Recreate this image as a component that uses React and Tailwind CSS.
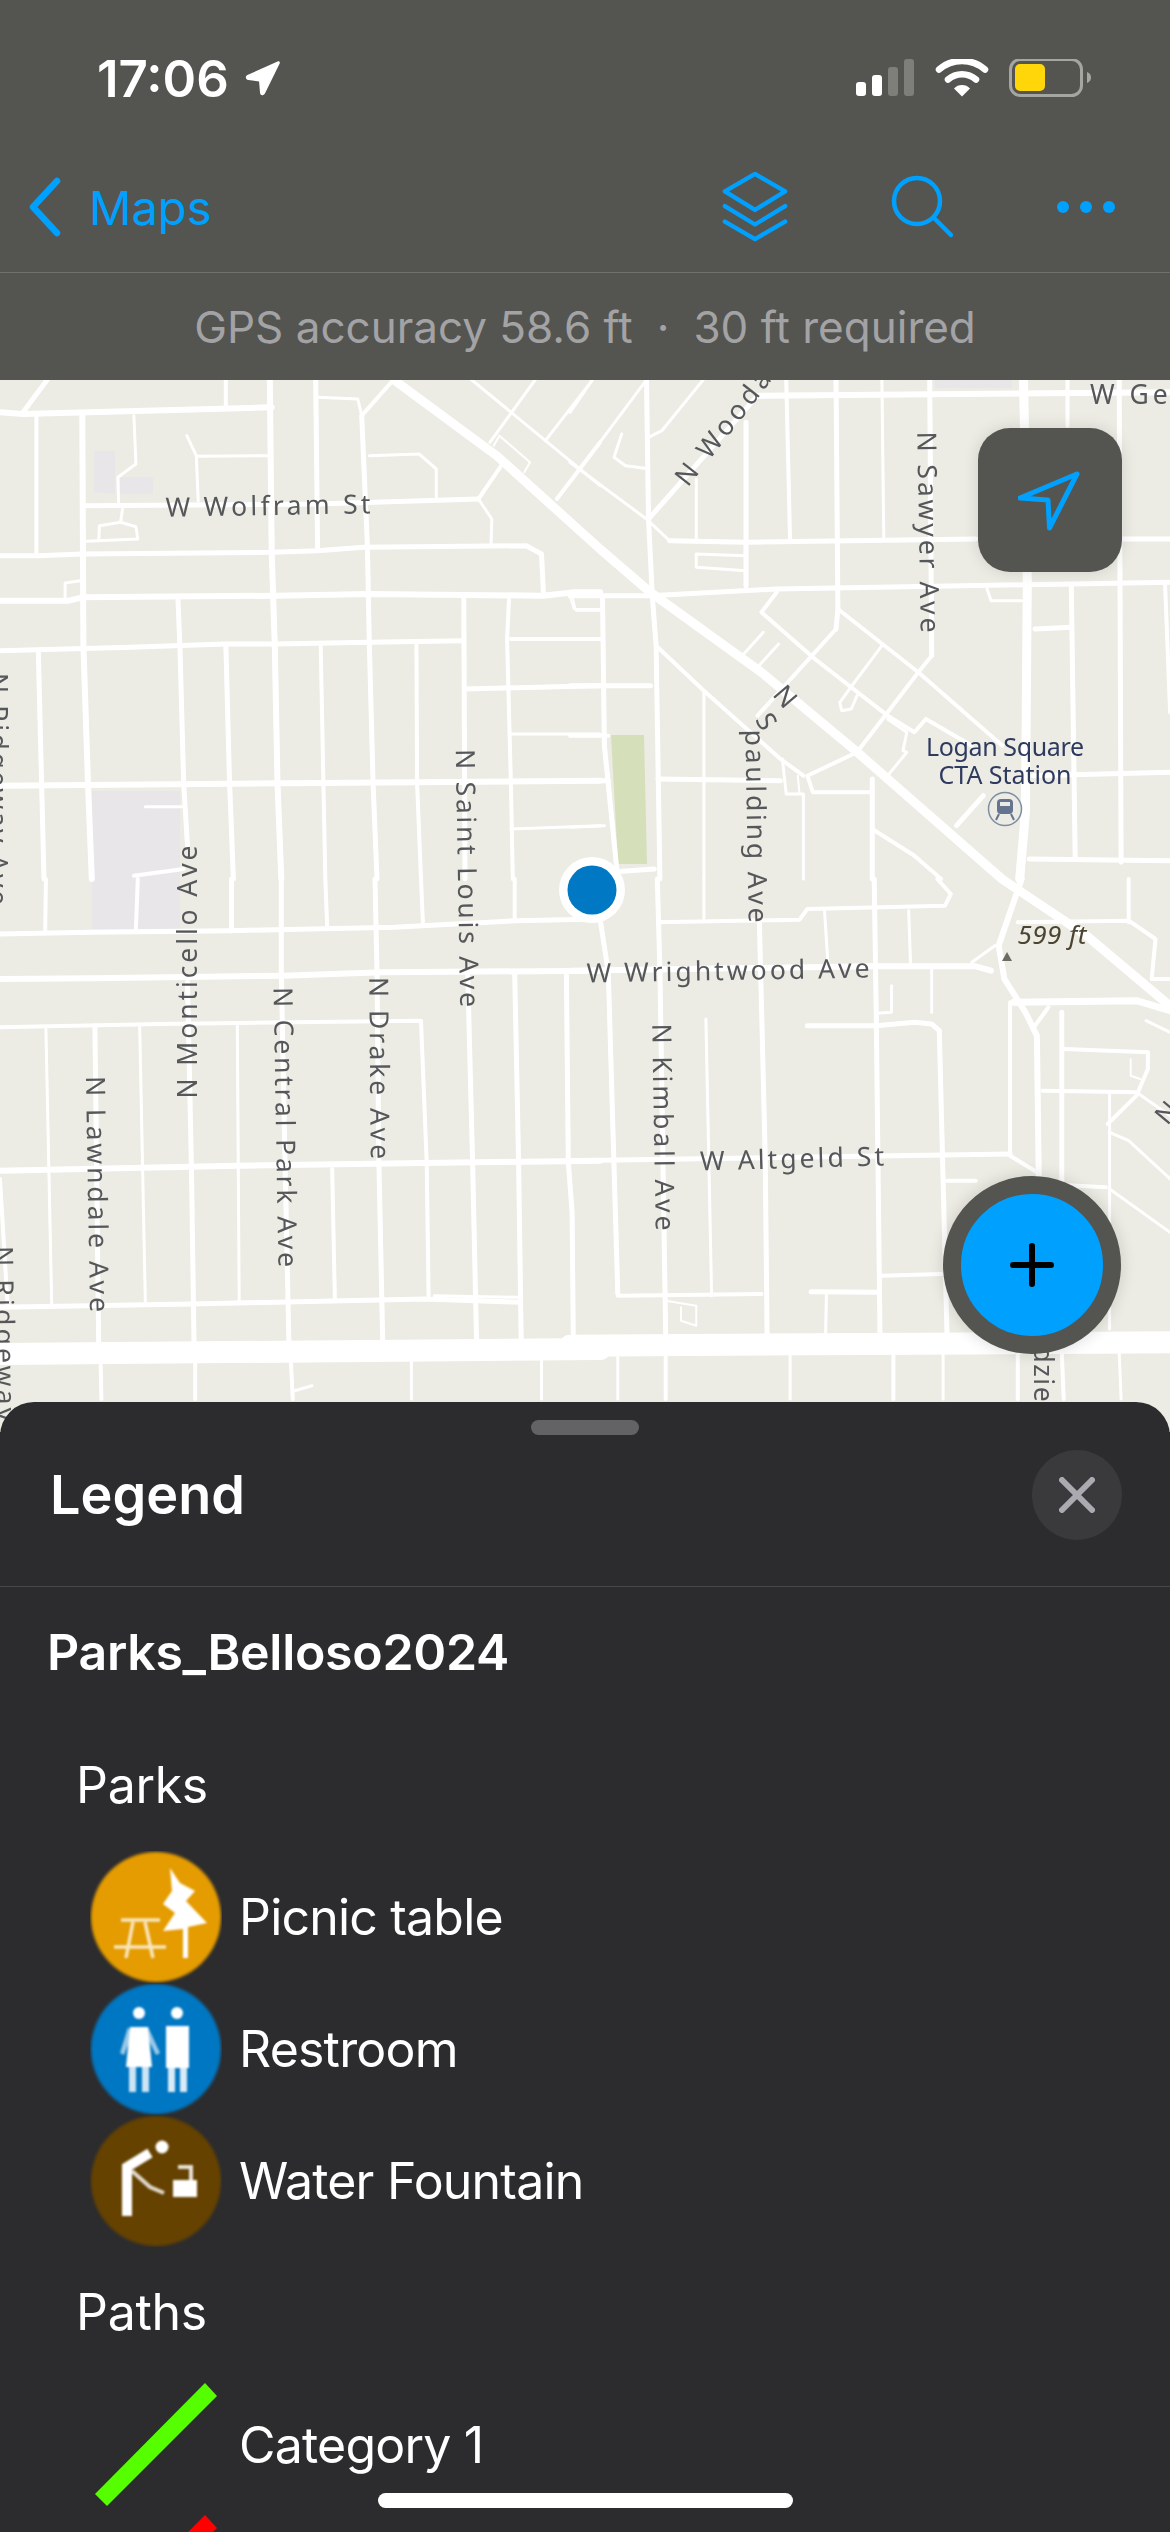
import React from "react";

const Z2 = [0, 380], Z3 = [570, 380], Z4 = [0, 880], Z5 = [570, 880];
const S = 2.613;
const pts = (z, p) =>
  p.split(" ").map((q) => {
    const [x, y] = q.split(",").map(Number);
    return `${(z[0] + x / S).toFixed(1)},${(z[1] + y / 3).toFixed(1)}`;
  }).join(" ");

const roads = [
  // zoom 2 : top left
  [Z2, 6, "0,100 60,105 710,85"], [Z2, 5, "60,100 125,0"], [Z2, 4, "590,85 590,0"],
  [Z2, 6, "705,0 710,520 718,800 725,1215 735,1500"],
  [Z2, 4, "95,110 95,530"], [Z2, 5, "100,815 115,1500"],
  [Z2, 6, "215,110 218,800 230,1215 240,1500"],
  [Z2, 3, "350,110 355,255 308,295 310,375"], [Z2, 3, "488,170 513,230 518,365"], [Z2, 3, "513,232 705,230"],
  [Z2, 5, "225,380 830,375 1250,360"],
  [Z2, 3, "320,390 315,430 260,440 258,485"], [Z2, 3, "315,430 355,443 360,480 225,487"],
  [Z2, 5, "0,530 100,530 215,525 710,520 830,515 950,505 1375,500 1415,525 1420,640"],
  [Z2, 6, "0,665 180,665 215,655 720,650 965,645 1420,650 1500,640 1568,640"],
  [Z2, 3, "170,655 170,612 210,605"], [Z2, 5, "465,665 470,800 480,1215 490,1400"],
  [Z2, 5, "0,815 340,805 590,795 720,795 965,790 1210,785"],
  [Z2, 5, "590,795 600,1215 610,1500"], [Z2, 4, "838,800 850,1500"],
  [Z2, 5, "945,110 960,500 965,790 975,1215 985,1500"], [Z2, 3, "945,110 935,60 830,55"], [Z2, 4, "945,110 1030,0"],
  [Z2, 5, "825,0 830,515"], [Z2, 4, "1088,790 1090,1215 1100,1500"], [Z2, 5, "1212,660 1215,1500"],
  [Z2, 4, "1330,660 1325,780 1335,1215 1340,1500"], [Z2, 4, "1335,780 1568,780"], [Z2, 5, "1215,930 1568,920"],
  [Z2, 3, "1335,1065 1568,1065"], [Z2, 3, "1335,1350 1568,1340"], [Z2, 6, "0,1220 1568,1205"],
  [Z2, 2, "1495,650 1505,695 1568,695"], [Z2, 3, "965,230 1095,225 1140,270 1140,355"],
  [Z2, 3, "1250,360 1285,420 1283,500"], [Z2, 4, "1250,360 1310,260"], [Z2, 3, "1280,190 1400,0"],
  [Z2, 3, "1230,0 1568,320"], [Z2, 2, "1305,170 1385,250 1370,280"], [Z2, 2, "1290,200 1305,170"],
  [Z2, 3, "1425,185 1550,0"], [Z2, 4, "1455,360 1568,190"], [Z2, 3, "380,1283 475,1283"],
  [Z2, 4, "350,1490 480,1470"],
  // zoom 4 : bottom left
  [Z4, 5, "0,165 240,160 600,155 1030,145 1350,125 1568,120"],
  [Z4, 6, "0,300 240,298 740,290 1000,280 1568,275"],
  [Z4, 4, "0,445 420,435 1100,425 1115,850 1120,1250"],
  [Z4, 6, "0,875 620,860 1240,850 1568,845"],
  [Z4, 5, "0,1285 500,1275 1110,1260 1360,1270"], [Z4, 3, "1135,1250 1355,1255"],
  [Z4, 3, "120,450 135,1275"], [Z4, 5, "248,440 258,1400"], [Z4, 4, "263,1460 265,1560"],
  [Z4, 3, "365,445 380,1280"], [Z4, 5, "490,310 500,860 507,1390"], [Z4, 4, "510,1450 510,1560"],
  [Z4, 3, "620,440 625,1270"], [Z4, 5, "735,0 735,280 745,860 755,1390"], [Z4, 4, "760,1450 765,1560"],
  [Z4, 5, "605,0 605,155"], [Z4, 4, "850,0 855,145"], [Z4, 4, "868,870 875,1265"],
  [Z4, 5, "980,0 985,280 990,850 1000,1385"], [Z4, 4, "1100,0 1105,130"],
  [Z4, 5, "1222,280 1235,850 1245,1380"], [Z4, 4, "1345,0 1345,120"], [Z4, 5, "1345,285 1355,850 1362,1385"],
  [Z4, 5, "1480,285 1485,850 1495,1000 1498,1380"], [Z4, 3, "1075,1450 1075,1560"], [Z4, 3, "1415,1440 1415,1560"],
  [Z4, 3, "770,1535 815,1520"], [Z4, 4, "0,900 20,1285"], [Z4, 4, "120,0 118,155"], [Z4, 4, "360,0 355,150"],
  // zoom 5 : bottom right
  [Z5, 4, "230,130 600,122 620,90 980,80 995,45 960,0"],
  [Z5, 5, "80,130 100,280 125,1245"], [Z5, 5, "228,0 235,270 250,1370"], [Z5, 5, "495,130 510,830 515,1370"],
  [Z5, 3, "350,0 350,125"], [Z5, 3, "665,95 675,270"], [Z5, 5, "795,0 800,400 810,1365"], [Z5, 3, "885,95 890,260"],
  [Z5, 6, "0,275 780,262 1060,262 1100,275"], [Z5, 5, "0,845 1150,825"], [Z5, 4, "125,1250 500,1245"],
  [Z5, 3, "355,420 370,1250"], [Z5, 5, "620,440 800,440 900,430 945,435 965,455 985,1365"],
  [Z5, 3, "840,320 840,400 805,403"], [Z5, 3, "945,270 945,400"], [Z5, 4, "815,1190 970,1185"],
  [Z5, 5, "630,1238 800,1240"], [Z5, 3, "670,1245 668,1370"], [Z5, 4, "985,905 1060,905"],
  [Z5, 3, "125,1435 125,1560"], [Z5, 4, "250,1435 250,1560"], [Z5, 3, "575,1430 575,1560"],
  [Z5, 4, "845,1425 845,1560"], [Z5, 3, "975,1425 975,1560"], [Z5, 4, "1170,1420 1170,1560"],
  [Z5, 4, "1285,1420 1290,1560"], [Z5, 3, "1435,1420 1440,1560"],
  [Z5, 2, "250,1265 330,1280 330,1340 290,1325 290,1285"],
  [Z5, 6, "1180,0 1120,200 1135,300 1190,400 1220,470 1225,900"],
  [Z5, 7, "1160,370 1480,365 1568,395"],
  [Z5, 4, "1250,385 1215,440"], [Z5, 4, "1150,370 1150,830 1220,880"], [Z5, 5, "1285,400 1285,910"],
  [Z5, 4, "1235,635 1480,640"], [Z5, 4, "1290,510 1510,520 1510,570 1480,650 1405,735"],
  [Z5, 2, "1465,540 1465,590 1490,600"], [Z5, 3, "1410,640 1410,1350"], [Z5, 3, "1480,640 1568,710"],
  [Z5, 3, "1410,760 1460,785 1568,900"], [Z5, 3, "1410,930 1568,1060"], [Z5, 4, "1240,915 1400,925"],
  [Z5, 3, "1050,250 1110,200"], [Z5, 4, "1170,130 1460,125 1530,180 1520,300 1568,300"],
  [Z5, 4, "1460,0 1460,130"], [Z5, 3, "1505,425 1568,460"],
  // zoom 3 : top right
  [Z3, 6, "490,50 1568,40"], [Z3, 5, "260,485 460,490 1060,480"], [Z3, 5, "1440,480 1568,480"],
  [Z3, 5, "0,650 210,650 540,630 1568,610"], [Z3, 5, "200,0 205,420 215,650 225,800 235,1500"],
  [Z3, 3, "330,300 330,490"], [Z3, 5, "460,130 460,620"], [Z3, 4, "565,0 575,490"],
  [Z3, 5, "695,0 700,690 695,750"], [Z3, 3, "815,0 820,480"], [Z3, 5, "940,0 945,830"],
  [Z3, 9, "1185,0 1195,610 1190,1300 1175,1500"], [Z3, 4, "1300,0 1300,140"], [Z3, 5, "1310,620 1320,1440"],
  [Z3, 5, "1435,0 1440,1450"], [Z3, 4, "1555,620 1568,1000"],
  [Z3, 3, "0,310 195,10"], [Z3, 3, "205,175 240,155 350,0"], [Z3, 5, "205,420 490,50"], [Z3, 3, "60,0 0,100"],
  [Z3, 3, "0,250 200,420 260,485"], [Z3, 3, "135,165 115,235 145,260 195,268"],
  [Z3, 3, "460,530 330,525 330,565 460,575"], [Z3, 2, "0,655 10,690 80,690"], [Z3, 5, "85,650 90,1100 125,1500"],
  [Z3, 4, "0,780 85,780"], [Z3, 5, "0,920 210,920"], [Z3, 4, "0,1070 100,1070"], [Z3, 5, "0,1205 100,1205"],
  [Z3, 4, "225,800 350,935 550,1140 610,1190"], [Z3, 4, "540,640 500,700 640,840 830,1010 900,1060 930,1020 1050,1100"],
  [Z3, 4, "700,690 910,880 1130,1100"], [Z3, 4, "945,830 910,880 750,1120 620,1190 635,1240 790,1240"],
  [Z3, 4, "695,750 490,1010"], [Z3, 3, "505,760 450,830"], [Z3, 3, "545,795 490,865"],
  [Z3, 3, "815,800 740,915 705,970 710,995 735,990 750,950"], [Z3, 3, "830,1020 880,1060 870,1115 880,1120 830,1190"],
  [Z3, 3, "350,935 350,1500"], [Z3, 5, "230,1200 550,1205"], [Z3, 3, "555,1140 565,1245 610,1245 610,1500"],
  [Z3, 2, "595,1190 600,1245"], [Z3, 4, "790,1350 900,1430 970,1500"], [Z3, 5, "790,1200 790,1500"],
  [Z3, 5, "1010,1340 1080,1250"], [Z3, 5, "1215,750 1310,745"], [Z3, 5, "1210,1190 1568,1180"],
  [Z3, 3, "1090,630 1100,665 1180,665"], [Z3, 5, "1200,1440 1568,1445"], [Z3, 3, "0,1345 90,1340"], [Z3, 5, "100,1480 220,1470"],
  // large roads
  [Z4, 22, "0,1425 1568,1410"], [Z5, 22, "0,1400 1568,1390"],
];

const labels = [
  ["W Wolfram St", 268, 506, 205, -1],
  ["N Saint Louis Ave", 468, 879, 258, 89],
  ["N Monticello Ave", 187, 973, 253, -90],
  ["N Central Park Ave", 286, 1128, 280, 89],
  ["N Drake Ave", 380, 1069, 182, 89.5],
  ["N Lawndale Ave", 98, 1195, 236, 89],
  ["N Ridgeway Ave", 6, 1367, 240, 89],
  ["N Ridgeway Ave", -2, 790, 232, 90],
  ["N Kimball Ave", 664, 1128, 207, 89],
  ["W Wrightwood Ave", 728, 971, 283, -1],
  ["W Altgeld St", 792, 1159, 184, -1.5],
  ["N Sawyer Ave", 929, 533, 201, 89],
  ["N Woodard St", 746, 398, 215, -52],
  ["N", 786, 697, 0, 50],
  ["S", 767, 722, 0, 60],
  ["paulding Ave", 757, 827, 193, 89],
  ["N Kedzie Ave", 1044, 1372, 178, 90],
  ["N", 1166, 1113, 0, -50],
];

function MapDrawing() {
  return (
    <svg width="1170" height="1052" viewBox="0 381 1170 1052" className="block blur-[0.4px]">
      <rect x="0" y="381" width="1170" height="1052" fill="#ecece4" />
      <polygon points="94,452 115,452 115,495 94,493" fill="#e9e6ea" />
      <polygon points="120,478 153,478 153,495 120,495" fill="#e9e6ea" />
      <polygon points="92,792 180,792 180,930 92,930" fill="#e9e6ea" />
      <polygon points="935,381 1012,381 1012,389 935,389" fill="#e9e6ea" />
      <polygon points="611,736 644,736 647,865 618,865" fill="#d5dfba" />
      {roads.map(([z, w, p], i) => (
        <polyline key={i} points={pts(z, p)} fill="none" stroke="#ffffff" strokeWidth={w} strokeLinejoin="round" strokeLinecap="round" />
      ))}
      <polyline points="394,381 497,457 600,550 650,593 761,673 857,753 1002,880 1087,937 1170,1007" fill="none" stroke="#ffffff" strokeWidth="9" strokeLinejoin="round" />
      <g fill="#55575a" fontFamily="'Noto Sans', sans-serif" fontSize="26.5">
        {labels.map(([t, x, y, len, rot], i) => (
          <text
            key={i}
            x={x}
            y={y}
            transform={`rotate(${rot} ${x} ${y})`}
            textAnchor="middle"
            dominantBaseline="central"
            {...(len ? { textLength: len, lengthAdjust: "spacing" } : {})}
          >
            {t}
          </text>
        ))}
        <text x="1090" y="395" dominantBaseline="central" letterSpacing="4">W George St</text>
      </g>
      <g fill="#2f3a5f" fontFamily="'Noto Sans', sans-serif" fontSize="25" textAnchor="middle" dominantBaseline="central">
        <text x="1005" y="747" textLength="158">Logan Square</text>
        <text x="1005" y="775" textLength="133">CTA Station</text>
      </g>
      <g>
        <circle cx="1005" cy="810" r="16.5" fill="#ecece4" stroke="#7d8da3" strokeWidth="1.5" />
        <rect x="997" y="800" width="16" height="15" rx="4" fill="#65758f" />
        <rect x="1000" y="803" width="10" height="4" fill="#ecece4" />
        <path d="M999 815l-3 6M1011 815l3 6" stroke="#65758f" strokeWidth="2" fill="none" />
      </g>
      <text x="1052" y="935" textAnchor="middle" dominantBaseline="central" textLength="69" fill="#4a4430" fontFamily="'Noto Sans', sans-serif" fontStyle="italic" fontSize="26">599 ft</text>
      <polygon points="1007,953 1012,962 1002,962" fill="#6e6b60" />
      <circle cx="592" cy="891" r="33" fill="#ffffff" />
      <circle cx="592" cy="891" r="24.5" fill="#0078c4" />
    </svg>
  );
}

function Signal() {
  return (
    <svg width="235" height="38" viewBox="856 59 235 38" className="block">
      <rect x="856" y="82" width="10" height="14" rx="3" fill="#fff" />
      <rect x="872" y="75" width="10" height="21" rx="3" fill="#fff" />
      <rect x="888" y="67" width="10" height="29" rx="3" fill="#7e7f7a" />
      <rect x="904" y="59" width="10" height="37" rx="3" fill="#7e7f7a" />
      <path d="M939 69.5a35 35 0 0 1 46 0" fill="none" stroke="#fff" strokeWidth="6.5" strokeLinecap="round" />
      <path d="M948 79.5a21 21 0 0 1 28 0" fill="none" stroke="#fff" strokeWidth="6.5" strokeLinecap="round" />
      <path d="M954 88.5a11 11 0 0 1 16 0L962 96.5Z" fill="#fff" />
      <rect x="1010.5" y="59.5" width="71" height="36" rx="10" fill="none" stroke="#a5a5a1" strokeWidth="3" />
      <rect x="1015" y="64" width="30" height="27" rx="5" fill="#ffd60a" />
      <path d="M1087 72c3 1 4 3 4 5.500s-1 4.500-4 5.500Z" fill="#a5a5a1" />
    </svg>
  );
}

function PicnicIcon() {
  return (
    <svg viewBox="0 0 132 132" className="w-[132px] h-[132px] block">
      <circle cx="66" cy="66" r="65" fill="#e59c00" className="blur-[1.5px]" />
      <g className="blur-[1px]">
        <polygon points="80,17 90,32 105,40 96,50 117,72 98,76 98,107 93,107 93,78 73,80 85,62 73,53 82,40" fill="#fff" />
        <path d="M31 69H70M24 96H76M43 71L36 107M55 71L63 107" stroke="#fff" strokeWidth="3.5" fill="none" opacity="0.75" />
      </g>
    </svg>
  );
}

function RestroomIcon() {
  return (
    <svg viewBox="0 0 132 132" className="w-[132px] h-[132px] block">
      <circle cx="66" cy="66" r="65" fill="#0077c2" className="blur-[1.5px]" />
      <g fill="#fff" className="blur-[1px]">
        <circle cx="49" cy="30" r="6" />
        <circle cx="87" cy="30" r="6" />
        <polygon points="40,44 58,44 62,84 36,84" />
        <polygon points="38,44 30,70 34,72 42,52" opacity="0.6" />
        <polygon points="58,44 70,70 66,72 56,52" opacity="0.6" />
        <rect x="39" y="84" width="7" height="25" opacity="0.8" />
        <rect x="52" y="84" width="7" height="25" opacity="0.8" />
        <rect x="76" y="43" width="23" height="42" />
        <rect x="78" y="85" width="7" height="24" opacity="0.85" />
        <rect x="90" y="85" width="7" height="24" opacity="0.85" />
      </g>
    </svg>
  );
}

function WaterIcon() {
  return (
    <svg viewBox="0 0 132 132" className="w-[132px] h-[132px] block">
      <circle cx="66" cy="66" r="65" fill="#654200" className="blur-[1.5px]" />
      <g className="blur-[1px]">
        <circle cx="72" cy="32" r="6.500" fill="#fff" />
        <path d="M37 101V52L60 38" stroke="#fff" strokeWidth="10" fill="none" />
        <path d="M42 56L60 72L74 78" stroke="#fff" strokeWidth="4" fill="none" opacity="0.8" />
        <rect x="83" y="65" width="24" height="17" fill="#fff" />
        <path d="M88 52H101V66" stroke="#fff" strokeWidth="4" fill="none" opacity="0.85" />
      </g>
    </svg>
  );
}

const Row = ({ icon, label }) => (
  <div className="flex items-center h-[132px] pl-[90px]">
    <div className="w-[132px] shrink-0">{icon}</div>
    <span className="ml-[17px] text-[50px] leading-none tracking-[-0.8px] text-white">{label}</span>
  </div>
);

export default function App() {
  return (
    <div className="relative w-[1170px] h-[2532px] overflow-hidden bg-[#2c2c2e] font-['Inter',sans-serif]">
      <header className="relative bg-[#545550]">
        <div className="flex h-[156px] items-center justify-between pl-[97px] pr-[79px]">
          <div className="flex items-center gap-[14px]">
            <span className="text-[51px] font-semibold leading-none text-white">17:06</span>
            <svg width="38" height="38" viewBox="241 59 38 39" className="block">
              <path d="M276 61.500L245 75.500c-2.500 1.500-2 4.500 1 5l11 1.500 1 12c.5 3 3.500 3 5 .5L278 64c1-2-.5-3.500-2-2.500Z" fill="#fff" />
            </svg>
          </div>
          <Signal />
        </div>
        <nav className="flex h-[117px] items-center border-b-[1.5px] border-[#6f706b] pb-[14px] pl-[28px] pr-[54px]">
          <svg width="34" height="60" viewBox="0 0 34 60" className="block">
            <path d="M29 4L5 30L29 56" fill="none" stroke="#00a0ff" strokeWidth="6.500" strokeLinecap="round" strokeLinejoin="round" />
          </svg>
          <span className="ml-[27px] text-[47px] leading-none text-[#00a0ff]">Maps</span>
          <div className="ml-auto flex items-center gap-[103px]">
            <svg width="66" height="70" viewBox="720 172 66 72" className="block">
              <g fill="none" stroke="#00a0ff" strokeWidth="4.500" strokeLinecap="round" strokeLinejoin="round">
                <path d="M753 174L784 192L753 211L722 192Z" />
                <path d="M722 207L753 226L784 207" />
                <path d="M722 223L753 241L784 223" />
              </g>
            </svg>
            <svg width="62" height="66" viewBox="890 174 62 66" className="block">
              <g fill="none" stroke="#00a0ff" strokeWidth="4.500" strokeLinecap="round">
                <circle cx="916" cy="201" r="23" />
                <path d="M933 218L950 235" />
              </g>
            </svg>
            <svg width="60" height="14" viewBox="1056 200 60 14" className="block">
              <circle cx="1063" cy="207" r="6" fill="#00a0ff" />
              <circle cx="1086" cy="207" r="6" fill="#00a0ff" />
              <circle cx="1109" cy="207" r="6" fill="#00a0ff" />
            </svg>
          </div>
        </nav>
        <div className="flex h-[107px] items-center justify-center text-[44px] leading-none text-[#a3a3a6]">
          <span>GPS accuracy 58.6 ft</span>
          <span className="mx-[24px]">·</span>
          <span>30 ft required</span>
        </div>
      </header>

      <main className="relative h-[1052px]">
        <MapDrawing />
        <button className="absolute left-[978px] top-[48px] flex h-[144px] w-[144px] items-center justify-center rounded-[32px] bg-[#545550] shadow-[0_0_16px_rgba(0,0,0,0.12)]">
          <svg width="64" height="64" viewBox="1018 469 64 64" className="block">
            <path d="M1077 475L1020 499L1048 501L1049.500 529Z" fill="none" stroke="#00a0ff" strokeWidth="5" strokeLinejoin="round" strokeLinecap="round" />
          </svg>
        </button>
        <button className="absolute left-[943px] top-[796px] flex h-[178px] w-[178px] items-center justify-center rounded-full border-[18px] border-[#545550] bg-[#00a0ff] shadow-[0_0_16px_rgba(0,0,0,0.15)]">
          <svg width="44" height="44" viewBox="0 0 44 44" className="block">
            <path d="M22 3V41M3 22H41" stroke="#000" strokeWidth="6" strokeLinecap="round" />
          </svg>
        </button>
      </main>

      <section className="relative -mt-[30px] rounded-t-[34px] bg-[#2c2c2e]">
        <div className="border-b-[1.5px] border-[#48484a] pt-[18px] pb-[46px]">
          <div className="mx-auto h-[15px] w-[108px] rounded-full bg-[#636366]" />
          <div className="mt-[15px] flex h-[90px] items-center justify-between pl-[50px] pr-[48px]">
            <h2 className="text-[54px] font-semibold leading-none text-white">Legend</h2>
            <button className="flex h-[90px] w-[90px] items-center justify-center rounded-full bg-[#3a3a3c]">
              <svg width="36" height="36" viewBox="0 0 36 36" className="block">
                <path d="M3 3L33 33M33 3L3 33" stroke="#aaaab0" strokeWidth="6" strokeLinecap="round" />
              </svg>
            </button>
          </div>
        </div>
        <h3 className="mt-[35px] pl-[47px] text-[50px] font-semibold leading-[60px] tracking-[-0.3px] text-white">Parks_Belloso2024</h3>
        <h4 className="mt-[73px] pl-[76px] text-[50px] leading-[60px] tracking-[-0.3px] text-white">Parks</h4>
        <div className="mt-[36px]">
          <Row icon={<PicnicIcon />} label="Picnic table" />
          <Row icon={<RestroomIcon />} label="Restroom" />
          <Row icon={<WaterIcon />} label="Water Fountain" />
        </div>
        <h4 className="mt-[35px] pl-[76px] text-[50px] leading-[60px] tracking-[-0.3px] text-white">Paths</h4>
        <div className="mt-[37px]">
          <Row
            icon={
              <svg viewBox="0 0 132 132" className="w-[132px] h-[132px] block">
                <polygon points="115,4 127,17 17,127 5,115" fill="#55ff00" />
              </svg>
            }
            label="Category 1"
          />
          <Row
            icon={
              <svg viewBox="0 0 132 132" className="w-[132px] h-[132px] block">
                <polygon points="115,4 127,17 17,127 5,115" fill="#ff0000" />
              </svg>
            }
            label="Category 2"
          />
        </div>
      </section>

      <div className="absolute bottom-[24px] left-[378px] h-[15px] w-[415px] rounded-full bg-white" />
    </div>
  );
}
